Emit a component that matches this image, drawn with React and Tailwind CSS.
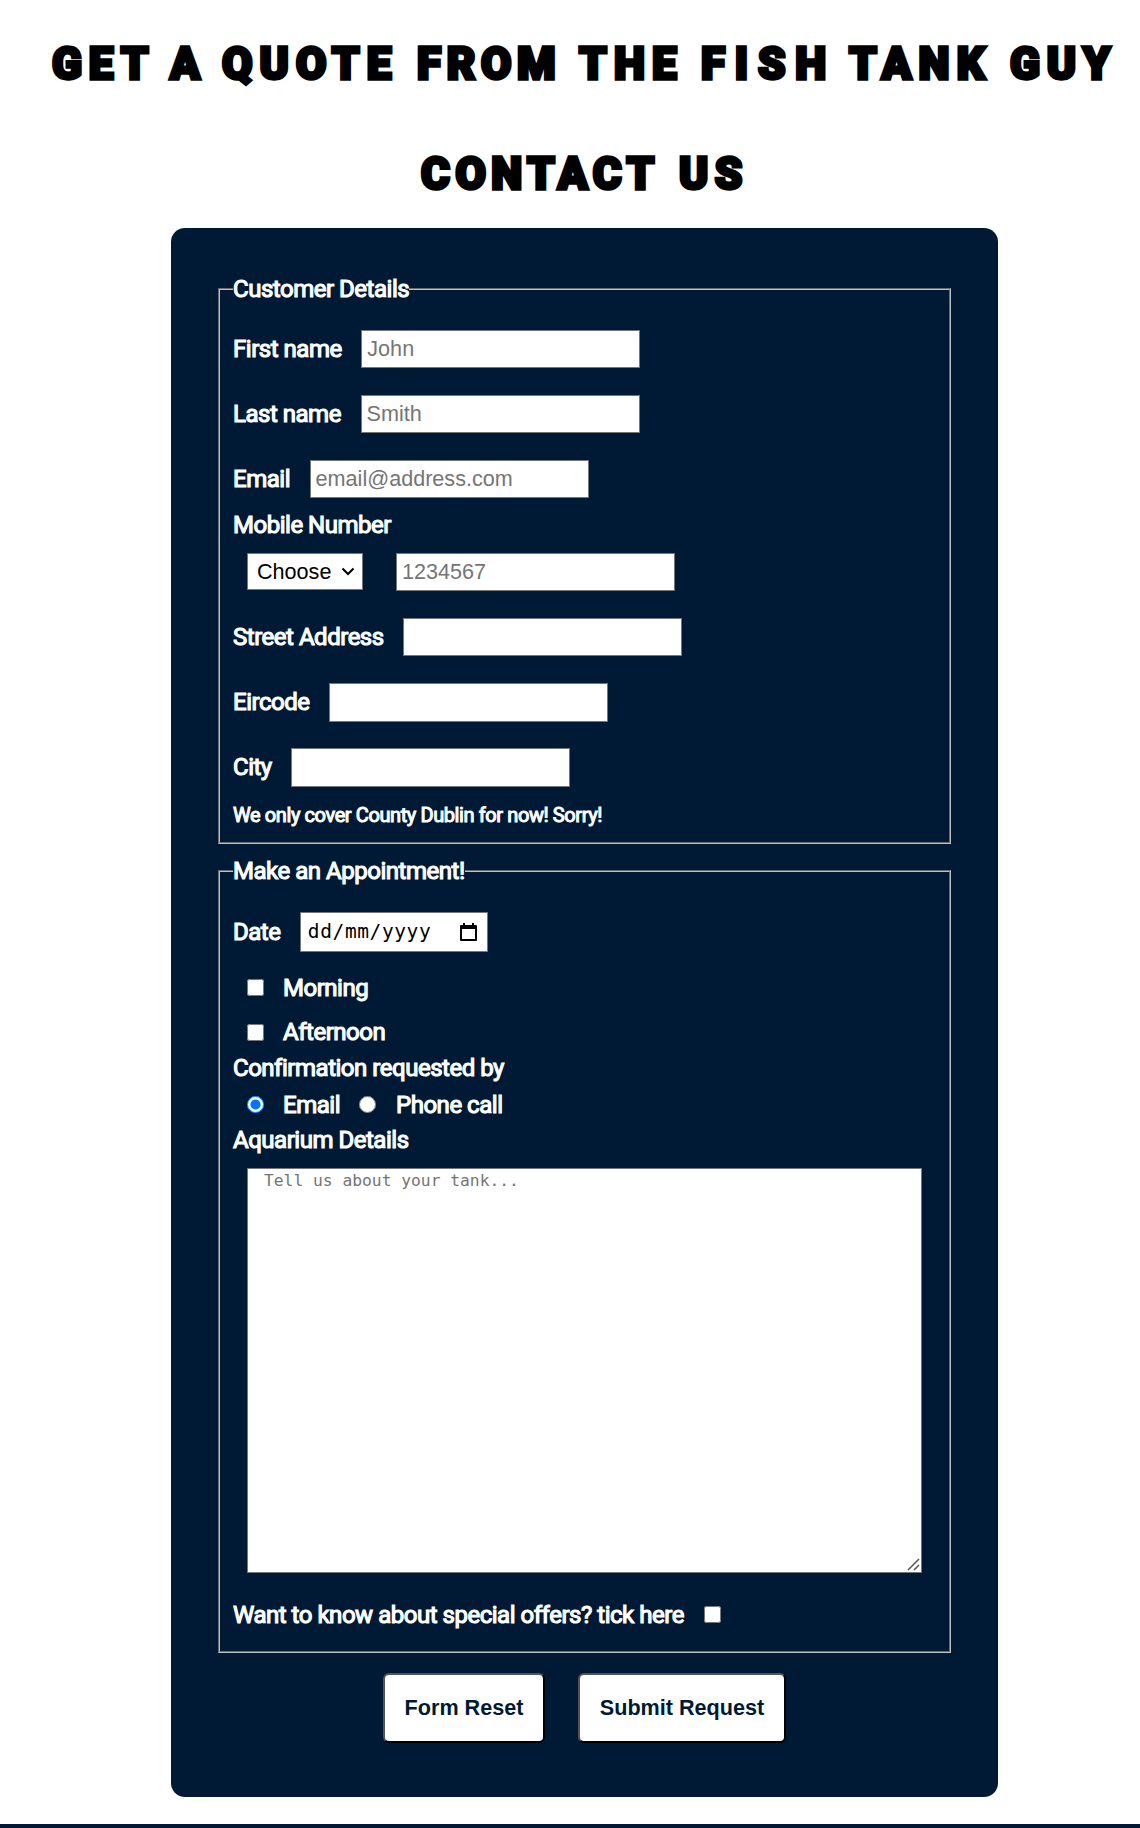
import React from 'react';

const inputClass =
  'block w-[279px] rounded-none border border-[#767676] bg-white px-[5px] text-[21.6px] text-black placeholder:text-[#757575] placeholder:opacity-100 outline-none';
const labelClass =
  'block h-[28px] whitespace-nowrap text-[24px] leading-[28px] tracking-[-0.02em] [-webkit-text-stroke:1.1px_white]';
const legendClass = `ml-[13px] w-fit ${labelClass}`;
const fieldsetClass = 'w-[733px] border-2 border-[#c0c0c0] [border-style:groove]';
const checkClass = 'm-0 block h-[17px] w-[17px] shrink-0';
const buttonClass =
  'h-[70px] rounded-[6px] border-2 border-black bg-white text-center text-[21.6px] font-bold text-[#001a35] [border-style:outset]';
const headingClass =
  "font-['Roboto'] text-[44px] leading-[54px] font-black text-black [-webkit-text-stroke:3.4px_black]";

function Field({ label, placeholder, className }) {
  return (
    <div className={`flex items-start gap-[19.6px] ${className}`}>
      <label className={`mt-[5px] ${labelClass}`}>{label}</label>
      <input className={`${inputClass} h-full`} placeholder={placeholder} />
    </div>
  );
}

function CalendarIcon() {
  return (
    <svg width="17" height="18" viewBox="0 0 17 18" fill="none">
      <path d="M1 3h15v14H1z" stroke="black" strokeWidth="2" strokeLinejoin="round" />
      <path d="M1 2h15v4H1zM3 0h2v3H3zM12 0h2v3h-2z" fill="black" />
    </svg>
  );
}

export default function App() {
  return (
    <div className="flex h-[1828px] w-[1140px] flex-col overflow-hidden bg-white font-['Liberation_Sans',sans-serif]">
      <h1 className={`mt-[37px] ml-[52px] grid grid-cols-[118px_52px_195px_162px_122px_148px_161px_1fr] ${headingClass}`}>
        <span className="tracking-[6.8px]">GET </span>
        <span>A </span>
        <span className="tracking-[7.2px]">QUOTE </span>
        <span className="tracking-[5.6px]">FROM </span>
        <span className="tracking-[7.2px]">THE </span>
        <span className="tracking-[9.8px]">FISH </span>
        <span className="tracking-[7.2px]">TANK </span>
        <span className="tracking-[6.8px]">GUY</span>
      </h1>
      <h1 className={`mt-[56px] ml-[421px] grid grid-cols-[258px_1fr] ${headingClass}`}>
        <span className="tracking-[5.5px]">CONTACT </span>
        <span className="tracking-[6.500px]">US</span>
      </h1>

      <form className="mt-[27px] ml-[171px] h-[1569px] w-[827px] shrink-0 rounded-[14px] bg-[#001a35] pt-[47px] pl-[47px] font-['Liberation_Sans'] text-white">
        <fieldset className={`h-[569px] font-['Roboto'] ${fieldsetClass}`}>
          <legend className={legendClass}>Customer Details</legend>
          <div className="pl-[13px] pt-[27px] [&_input]:font-['Liberation_Sans']">
            <Field label="First name" placeholder="John" className="h-[38px]" />
            <Field label="Last name" placeholder="Smith" className="mt-[27px] h-[38px]" />
            <Field label="Email" placeholder="email@address.com" className="mt-[27px] h-[38px]" />
            <span className={`mt-[13px] ${labelClass}`}>Mobile Number</span>
            <div className="mt-[14px] ml-[14px] flex h-[38px] items-start gap-[33px]">
              <div className="relative h-[37px] w-[116px]">
                <select className="block h-[37px] w-[116px] appearance-none rounded-none border border-[#767676] bg-white pt-px pl-[9px] font-['Liberation_Sans'] text-[21.6px] text-black">
                  <option>Choose</option>
                </select>
                <svg className="pointer-events-none absolute top-[14px] right-[8px]" width="14" height="9" viewBox="0 0 14 9" fill="none">
                  <path d="M1.5 1.5 7 7l5.500-5.500" stroke="black" strokeWidth="2" />
                </svg>
              </div>
              <input className={`${inputClass} h-[38px]`} placeholder="1234567" />
            </div>
            <Field label="Street Address" className="mt-[27px] h-[38px]" />
            <Field label="Eircode" className="mt-[27px] h-[39px]" />
            <Field label="City" className="mt-[26px] h-[39px]" />
            <p className="mt-[16px] h-[24px] text-[20px] leading-[24px] tracking-[-0.02em] whitespace-nowrap [-webkit-text-stroke:1px_white]">
              We only cover County Dublin for now! Sorry!
            </p>
          </div>
        </fieldset>

        <fieldset className={`mt-[13px] h-[796px] font-['Roboto'] ${fieldsetClass}`}>
          <legend className={legendClass}>Make an Appointment!</legend>
          <div className="pl-[13px] pt-[27px]">
            <div className="flex h-[40px] items-center gap-[19.4px]">
              <label className={labelClass}>Date</label>
              <div className="flex h-[40px] w-[188px] items-center justify-between border border-[#767676] bg-white pr-[10px] pl-[7px] font-['DejaVu_Sans_Mono'] text-[19.500px] tracking-[0.6px] text-black">
                <span>dd/mm/yyyy</span>
                <CalendarIcon />
              </div>
            </div>
            <div className="mt-[22px] ml-[14px] flex items-center gap-[19px]">
              <input type="checkbox" className={`${checkClass} -mt-[2px]`} />
              <span className={labelClass}>Morning</span>
            </div>
            <div className="mt-[16px] ml-[14px] flex items-center gap-[19px]">
              <input type="checkbox" className={checkClass} />
              <span className={labelClass}>Afternoon</span>
            </div>
            <span className={`mt-[8px] ${labelClass}`}>Confirmation requested by</span>
            <div className="mt-[9px] ml-[14px] flex items-center">
              <input type="radio" name="confirm" defaultChecked className="-mt-[2px] block h-[17px] w-[17px] shrink-0" />
              <span className={`ml-[19px] ${labelClass}`}>Email</span>
              <input type="radio" name="confirm" className="-mt-[2px] ml-[19px] block h-[17px] w-[17px] shrink-0" />
              <span className={`ml-[20px] ${labelClass}`}>Phone call</span>
            </div>
            <span className={`mt-[7px] ${labelClass}`}>Aquarium Details</span>
            <div className="relative mt-[14px] ml-[14px] w-[675px]">
              <textarea
                className="block h-[405px] w-[675px] resize-none rounded-none border border-[#767676] bg-white pt-[2px] pl-[16px] font-['DejaVu_Sans_Mono'] text-[16.3px] leading-[20px] text-black outline-none placeholder:text-[#757575] placeholder:opacity-100"
                placeholder="Tell us about your tank..."
              />
              <svg className="pointer-events-none absolute right-[2px] bottom-[2px]" width="13" height="13" viewBox="0 0 13 13">
                <path d="M1 12 12 1M7 12l5-5" stroke="#555" strokeWidth="1.5" />
              </svg>
            </div>
            <div className="mt-[28px] flex items-center gap-[20px]">
              <span className={labelClass}>Want to know about special offers? tick here</span>
              <input type="checkbox" className={`${checkClass} -mt-px`} />
            </div>
          </div>
        </fieldset>

        <div className="mt-[20px] ml-[165px] flex gap-[33px]">
          <button type="reset" className={`w-[162px] ${buttonClass}`}>Form Reset</button>
          <button type="button" className={`w-[208px] ${buttonClass}`}>Submit Request</button>
        </div>
      </form>
      <footer className="mt-[27px] h-[4px] shrink-0 bg-[#001a35]" />
    </div>
  );
}
